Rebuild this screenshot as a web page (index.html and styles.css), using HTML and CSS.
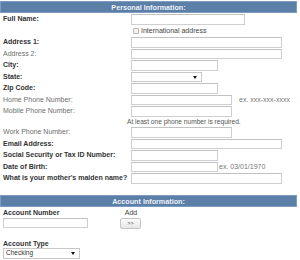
FILE: index.html
```html
<!DOCTYPE html>
<html lang="en">
    <head>
        <meta charset="UTF-8">
        <title>Application Form</title>
        <link rel="stylesheet" href="styles.css">
    </head>
    <body>
        <div class="form">
            <div class="bar">Personal Information:</div>
            <div class="grid">
                <label class="req">Full Name:</label>
                <div class="field"><input type="text" class="w-name"></div>

                <span></span>
                <div class="field"><label class="check"><input type="checkbox"> International address</label></div>

                <label class="req">Address 1:</label>
                <div class="field"><input type="text" class="w-long"></div>

                <label>Address 2:</label>
                <div class="field"><input type="text" class="w-long"></div>

                <label class="req">City:</label>
                <div class="field"><input type="text" class="w-mid"></div>

                <label class="req">State:</label>
                <div class="field"><span class="select w-state"></span></div>

                <label class="req">Zip Code:</label>
                <div class="field"><input type="text" class="w-mid"></div>

                <label>Home Phone Number:</label>
                <div class="field"><input type="text" class="w-phone"><span class="hint phone">ex. xxx-xxx-xxxx</span></div>

                <label>Mobile Phone Number:</label>
                <div class="field"><input type="text" class="w-phone"></div>

                <span class="note-gap"></span>
                <div class="note">At least one phone number is required.</div>

                <label>Work Phone Number:</label>
                <div class="field"><input type="text" class="w-phone"></div>

                <label class="req">Email Address:</label>
                <div class="field"><input type="text" class="w-long"></div>

                <label class="req">Social Security or Tax ID Number:</label>
                <div class="field"><input type="text" class="w-mid"></div>

                <label class="req">Date of Birth:</label>
                <div class="field"><input type="text" class="w-mid"><span class="hint">ex. 03/01/1970</span></div>

                <label class="req">What is your mother's maiden name?</label>
                <div class="field"><input type="text" class="w-long"></div>
            </div>

            <div class="bar bar-account">Account Information:</div>
            <div class="account">
                <div class="acc-col">
                    <label class="req acc-label">Account Number</label>
                    <input type="text" class="w-acc">
                </div>
                <div class="add-col">
                    <span class="acc-label add">Add</span>
                    <button type="button" class="btn-add">&gt;&gt;</button>
                </div>
            </div>
            <div class="acc-type">
                <label class="req acc-label">Account Type</label>
                <span class="select w-type">Checking</span>
            </div>
        </div>
    </body>
</html>
```

FILE: styles.css
```css
body {
    margin: 0;
    background: #fff;
    font-family: "Liberation Sans", Arial, sans-serif;
    font-size: 7px;
    color: #6e6e6e;
}

.form {
    width: 297px;
    padding-top: 1px;
}

.bar {
    height: 12px;
    line-height: 11px;
    background: #5b7fa7;
    border: 1px solid #7c9cc0;
    box-sizing: border-box;
    color: #eef2fa;
    font-weight: bold;
    font-size: 7.2px;
    text-align: center;
    margin-bottom: 1px;
}

.bar-account {
    margin-top: 10.5px;
}

.grid {
    display: grid;
    grid-template-columns: 128px 1fr;
    padding-left: 3px;
}

.grid > label,
.grid > span {
    height: 11.5px;
    line-height: 10.5px;
    white-space: nowrap;
}

.grid > .note-gap {
    height: 9.5px;
}

.req {
    font-weight: bold;
    color: #333;
}

.field {
    height: 11.5px;
    display: flex;
    align-items: flex-start;
}

input[type="text"] {
    box-sizing: border-box;
    height: 10.5px;
    margin: 0;
    padding: 0;
    border: 1px solid #cfcfcf;
    border-top-color: #c2c2c2;
    background: #fff;
    font-size: 7px;
}

.w-name { width: 114px; }
.w-long { width: 151px; }
.w-mid { width: 87px; }
.w-phone { width: 101px; }

.hint {
    line-height: 10.5px;
    margin-left: 7px;
    color: #777;
}

.w-mid + .hint {
    margin-left: 1px;
}

.check {
    display: flex;
    align-items: center;
    height: 10.5px;
    margin-left: 2px;
    color: #444;
}

.check input {
    appearance: none;
    width: 6px;
    height: 6px;
    margin: 0 2px 0 0;
    border: 1px solid #b5b5b5;
    border-radius: 1px;
    background: #f3f3f3;
    box-sizing: border-box;
}

.select {
    position: relative;
    display: block;
    box-sizing: border-box;
    height: 10.5px;
    line-height: 8.5px;
    padding-left: 2px;
    border: 1px solid #c8c8c8;
    background: #fff;
    color: #333;
    font-size: 6.5px;
}

.select::after {
    content: "";
    position: absolute;
    right: 4px;
    top: 3px;
    border-left: 2px solid transparent;
    border-right: 2px solid transparent;
    border-top: 3px solid #111;
}

.w-state { width: 71px; }
.w-type { width: 77px; }

.note {
    height: 9.5px;
    line-height: 8px;
    margin-left: -4px;
    font-size: 6.6px;
    color: #555;
}

.account {
    display: flex;
    padding-left: 3px;
}

.acc-col {
    width: 117px;
}

.acc-label {
    display: block;
    height: 9.5px;
    line-height: 9.5px;
}

.w-acc {
    display: block;
    width: 85px;
}

.add-col {
    width: 22px;
    text-align: center;
}

.add {
    color: #444;
}

.btn-add {
    display: block;
    box-sizing: border-box;
    width: 21px;
    height: 11px;
    padding: 0;
    border: 1px solid #c4c4c4;
    border-radius: 2px;
    background: linear-gradient(#fbfbfb, #e6e6e6);
    color: #444;
    font-size: 5.5px;
    font-family: "Liberation Sans", Arial, sans-serif;
}

.acc-type {
    padding-left: 3px;
    margin-top: 10px;
}
```
